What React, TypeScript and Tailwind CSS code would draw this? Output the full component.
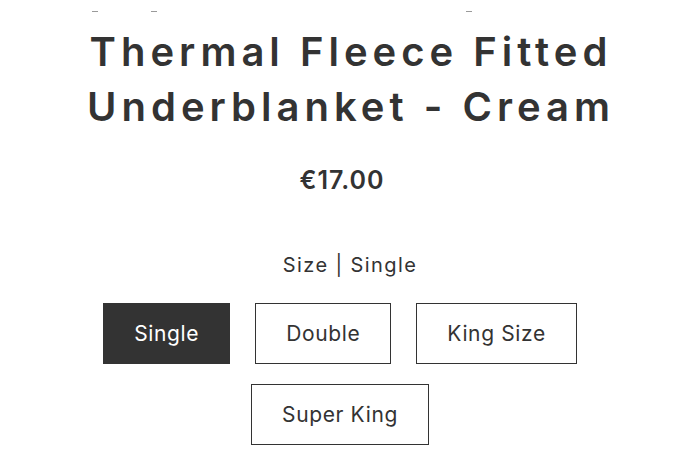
import React, { useState } from 'react';

const sizes = ['Single', 'Double', 'King Size', 'Super King'];

export default function App() {
  const [selected, setSelected] = useState('Single');

  return (
    <div className="min-h-[459px] w-full bg-white text-[#333333]" style={{ fontFamily: 'Inter, "Liberation Sans", sans-serif' }}>
      <div className="flex h-[24px] items-start pt-[11px]">
        <span className="ml-[92px] h-[1px] w-[6px] bg-[#9a9a9a]" />
        <span className="ml-[53px] h-[1px] w-[6px] bg-[#9a9a9a]" />
        <span className="ml-[309px] h-[1px] w-[6px] bg-[#9a9a9a]" />
      </div>

      <h1 className="mx-auto max-w-[640px] pl-[2px] text-center text-[40px] font-semibold leading-[55px] tracking-[0.125em]">
        Thermal Fleece Fitted Underblanket - Cream
      </h1>

      <div className="mt-[30px] pr-[16px] text-center text-[25px] font-semibold leading-[32px] tracking-[0.04em]">€17.00</div>

      <div className="mt-[55px] text-center text-[20px] leading-[28px] tracking-[0.07em]">Size | Single</div>

      <div className="mx-auto mt-[24px] flex max-w-[520px] flex-wrap justify-center gap-x-[25px] gap-y-[20px] pr-[20px]">
        {sizes.map((s) => (
          <button
            key={s}
            onClick={() => setSelected(s)}
            className={
              s === selected
                ? 'h-[61px] border-[1.5px] border-[#333333] bg-[#333333] px-[30px] text-[21px] tracking-[0.03em] text-white'
                : 'h-[61px] border-[1.5px] border-[#333333] bg-white px-[30px] text-[21px] tracking-[0.03em] text-[#333333]'
            }
          >
            {s}
          </button>
        ))}
      </div>
    </div>
  );
}
